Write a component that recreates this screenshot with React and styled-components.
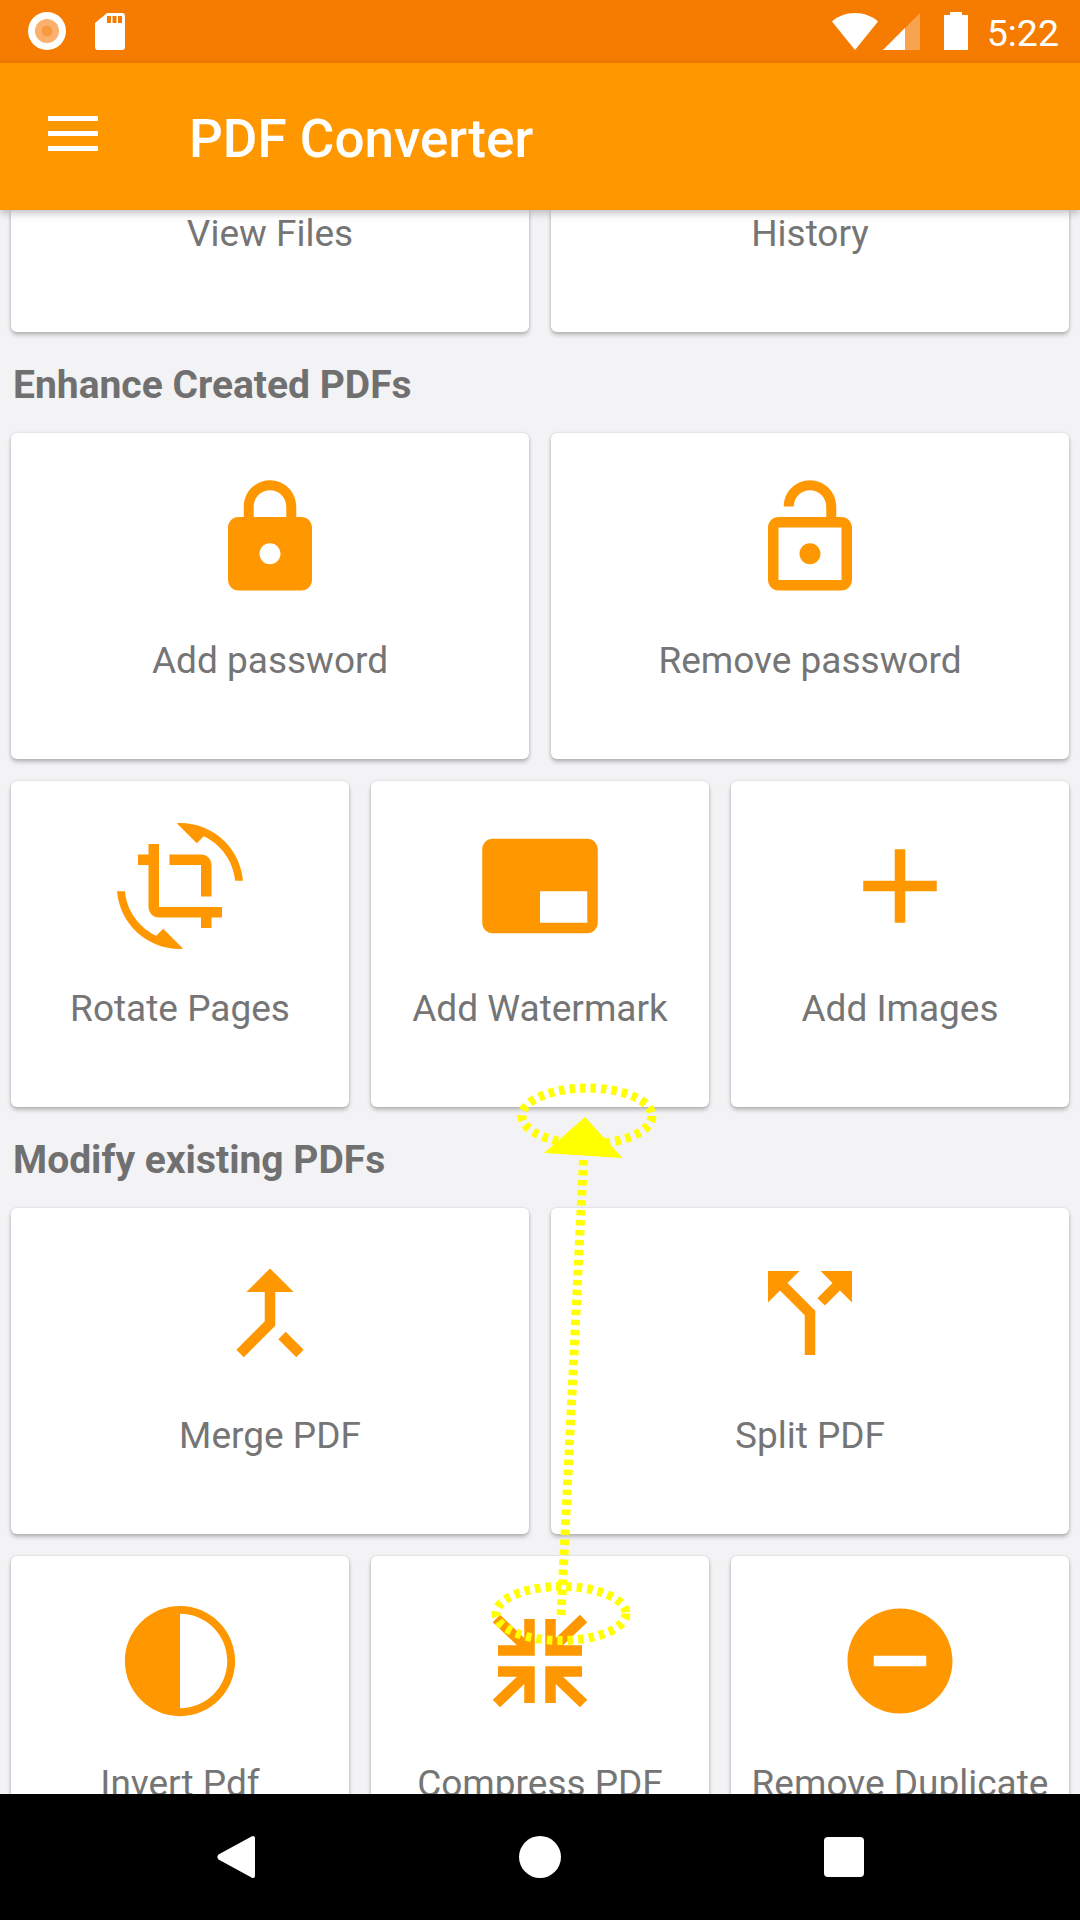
import React from 'react';
import styled, { createGlobalStyle } from 'styled-components';

const Global = createGlobalStyle`
  html, body { margin: 0; padding: 0; background: #f3f3f5; }
  * { box-sizing: border-box; }
`;

const Screen = styled.div`
  position: relative;
  width: 1080px;
  height: 1920px;
  display: flex;
  flex-direction: column;
  overflow: hidden;
  background: #f3f3f5;
  font-family: Roboto, "Liberation Sans", sans-serif;
`;

const StatusBar = styled.div`
  height: 63px;
  flex: none;
  background: #f57c00;
  display: flex;
  align-items: flex-start;
  justify-content: space-between;
  padding: 12px 21px 0 28px;
  color: #fff;
`;
const StatusGroup = styled.div`
  display: flex;
  align-items: flex-start;
  gap: ${p => p.$gap}px;
`;
const StatusIcon = styled.svg`
  display: block;
  flex: none;
  margin-left: ${p => p.$offset || 0}px;
`;
const Clock = styled.span`
  font-size: 37.5px;
  line-height: 38px;
  margin-left: 13.5px;
  padding-top: 2px;
  font-weight: 400;
`;

const Toolbar = styled.header`
  position: relative;
  z-index: 2;
  height: 147px;
  flex: none;
  background: #ff9800;
  box-shadow: 0 3px 8px rgba(0, 0, 0, 0.25);
  display: flex;
  align-items: center;
  padding-left: 48px;
`;
const Burger = styled.div`
  width: 50px;
  height: 35px;
  margin-right: 91px;
  margin-top: -7px;
  display: flex;
  flex-direction: column;
  justify-content: space-between;
`;
const BurgerBar = styled.span`
  display: block;
  height: 5px;
  background: #fff;
`;
const Title = styled.h1`
  margin: 4px 0 0;
  font-size: 53px;
  font-weight: 500;
  color: #fff;
`;

const Content = styled.main`
  flex: 1;
  min-height: 0;
  overflow: hidden;
  padding: 0 11px;
  display: flex;
  flex-direction: column;
`;
const Row = styled.div`
  display: grid;
  flex: none;
  grid-template-columns: repeat(${p => p.$cols}, 1fr);
  gap: 22px;
  margin-bottom: ${p => p.$after || 0}px;
`;
const Card = styled.div`
  height: 326px;
  background: #fff;
  border-radius: 6px;
  box-shadow: 0 3px 4px rgba(0, 0, 0, 0.24), 0 0 3px rgba(0, 0, 0, 0.12);
  display: flex;
  flex-direction: column;
  align-items: center;
  padding-top: 42px;
`;
const ScrolledCard = styled(Card)`
  height: 122px;
  padding-top: 3px;
  border-radius: 0 0 6px 6px;
`;
const Icon = styled.svg`
  display: block;
  width: 126px;
  height: 126px;
  flex: none;
  fill: #ff9800;
`;
const Label = styled.div`
  margin-top: 39px;
  font-size: 37px;
  line-height: 42px;
  color: #757575;
  white-space: nowrap;
`;
const ScrolledLabel = styled(Label)`
  margin-top: 0;
`;
const SectionTitle = styled.h2`
  flex: none;
  height: 101px;
  margin: 0;
  display: flex;
  align-items: center;
  font-size: 39px;
  font-weight: 700;
  color: #707070;
  padding: 4px 0 0 2px;
`;

const NavBar = styled.nav`
  position: relative;
  z-index: 2;
  height: 126px;
  flex: none;
  background: #000;
  display: grid;
  grid-template-columns: repeat(3, 42px);
  justify-content: center;
  justify-items: center;
  column-gap: 262px;
  align-items: center;
`;
const NavBack = styled.svg`
  display: block;
  width: 38px;
  height: 42px;
`;
const NavHome = styled.span`
  display: block;
  width: 42px;
  height: 42px;
  border-radius: 50%;
  background: #fff;
`;
const NavRecents = styled.span`
  display: block;
  width: 40px;
  height: 40px;
  border-radius: 4px;
  background: #fff;
`;

const Annotation = styled.svg`
  position: absolute;
  left: 0;
  top: 0;
  z-index: 1;
  pointer-events: none;
`;

const paths = {
  lock: 'M18 8h-1V6c0-2.76-2.24-5-5-5S7 3.24 7 6v2H6c-1.1 0-2 .9-2 2v10c0 1.1.9 2 2 2h12c1.1 0 2-.9 2-2V10c0-1.1-.9-2-2-2zm-6 9c-1.1 0-2-.9-2-2s.9-2 2-2 2 .9 2 2-.9 2-2 2zm3.1-9H8.9V6c0-1.71 1.39-3.1 3.1-3.1 1.71 0 3.1 1.39 3.1 3.1v2z',
  unlock: 'M12 17c1.1 0 2-.9 2-2s-.9-2-2-2-2 .9-2 2 .9 2 2 2zm6-9h-1V6c0-2.76-2.24-5-5-5S7 3.24 7 6h1.9c0-1.71 1.39-3.1 3.1-3.1 1.71 0 3.1 1.39 3.1 3.1v2H6c-1.1 0-2 .9-2 2v10c0 1.1.9 2 2 2h12c1.1 0 2-.9 2-2V10c0-1.1-.9-2-2-2zm0 12H6V10h12v10z',
  rotate: 'M7.47 21.49C4.2 19.93 1.86 16.76 1.5 13H0c.51 6.16 5.66 11 11.95 11 .23 0 .44-.02.66-.03L8.8 20.15l-1.33 1.34zM12.05 0c-.23 0-.44.02-.66.04l3.81 3.81 1.33-1.33C19.8 4.07 22.14 7.24 22.5 11H24c-.51-6.16-5.66-11-11.95-11zM16 14h2V8c0-1.11-.9-2-2-2h-6v2h6v6zm-8 2V4H6v2H4v2h2v8c0 1.1.89 2 2 2h8v2h2v-2h2v-2H8z',
  watermark: 'M21 3H3c-1.1 0-2 .9-2 2v14c0 1.1.9 2 2 2h18c1.1 0 2-.9 2-2V5c0-1.1-.9-2-2-2zm0 16h-9v-6h9v6z',
  add: 'M19 13h-6v6h-2v-6H5v-2h6V5h2v6h6v2z',
  merge: 'M17 20.41L18.41 19 15 15.59 13.59 17 17 20.41zM7.5 8H11v5.59L5.59 19 7 20.41l6-6V8h3.5L12 3.5 7.5 8z',
  split: 'M14 4l2.29 2.29-2.88 2.88 1.42 1.42 2.88-2.88L20 10V4zm-4 0H4v6l2.29-2.29 4.71 4.7V20h2v-8.41l-5.29-5.3z',
  invert: 'M12 1.5C6.2 1.5 1.5 6.2 1.5 12S6.2 22.5 12 22.5 22.5 17.8 22.5 12 17.8 1.5 12 1.5zm0 19.5V3c4.97 0 9 4.03 9 9s-4.03 9-9 9z',
  compress: 'M4 13h7v7H9v-3.6L4.4 20.8 3 19.4 7.6 15H4zM20 13h-7v7h2v-3.6l4.6 4.4 1.4-1.4-4.6-4.4H20zM4 11h7V4H9v3.6L4.4 3.2 3 4.6 7.6 9H4zM20 11h-7V4h2v3.6l4.6-4.4 1.4 1.4L16.4 9H20z',
  remove: 'M12 2C6.48 2 2 6.48 2 12s4.48 10 10 10 10-4.48 10-10S17.52 2 12 2zm5 11H7v-2h10v2z',
};

const Tile = ({ icon, label }) => (
  <Card>
    <Icon viewBox="0 0 24 24"><path d={paths[icon]} /></Icon>
    <Label>{label}</Label>
  </Card>
);

export default function App() {
  return (
    <Screen>
      <Global />
      <StatusBar>
        <StatusGroup $gap={28}>
          <StatusIcon width="38" height="38" viewBox="0 0 38 38">
            <circle cx="19" cy="19" r="19" fill="#fff" />
            <circle cx="19" cy="19" r="12" fill="#fbb06f" />
            <circle cx="19" cy="19" r="5.5" fill="#f89a3f" />
          </StatusIcon>
          <StatusIcon width="32" height="38" viewBox="0 0 32 38">
            <path fill="#fff" fillRule="evenodd" d="M13 1h15a3 3 0 0 1 3 3v31a3 3 0 0 1-3 3H4a3 3 0 0 1-3-3V11zM13 4v7h4V4zM18.500 4v7h4V4zM24 4v7h4V4z" />
          </StatusIcon>
        </StatusGroup>
        <StatusGroup $gap={5}>
          <StatusIcon width="46" height="38" viewBox="0 0 46 38">
            <path fill="#fff" d="M23 38 0 9.500C6 4 14 1 23 1s17 3 23 8.500z" />
          </StatusIcon>
          <StatusIcon width="37" height="38" viewBox="0 0 37 38">
            <path fill="#fff" fillOpacity="0.3" d="M37 1v37H0z" />
            <path fill="#fff" d="M22 16v22H0z" />
          </StatusIcon>
          <StatusIcon width="24" height="38" viewBox="0 0 24 38" $offset={19}>
            <path fill="#fff" d="M6 0h12v3h6v35H0V3h6z" />
          </StatusIcon>
          <Clock>5:22</Clock>
        </StatusGroup>
      </StatusBar>

      <Toolbar>
        <Burger><BurgerBar /><BurgerBar /><BurgerBar /></Burger>
        <Title>PDF Converter</Title>
      </Toolbar>

      <Content>
        <Row $cols={2}>
          <ScrolledCard><ScrolledLabel>View Files</ScrolledLabel></ScrolledCard>
          <ScrolledCard><ScrolledLabel>History</ScrolledLabel></ScrolledCard>
        </Row>
        <SectionTitle>Enhance Created PDFs</SectionTitle>
        <Row $cols={2} $after={22}>
          <Tile icon="lock" label="Add password" />
          <Tile icon="unlock" label="Remove password" />
        </Row>
        <Row $cols={3}>
          <Tile icon="rotate" label="Rotate Pages" />
          <Tile icon="watermark" label="Add Watermark" />
          <Tile icon="add" label="Add Images" />
        </Row>
        <SectionTitle>Modify existing PDFs</SectionTitle>
        <Row $cols={2} $after={22}>
          <Tile icon="merge" label="Merge PDF" />
          <Tile icon="split" label="Split PDF" />
        </Row>
        <Row $cols={3}>
          <Tile icon="invert" label="Invert Pdf" />
          <Tile icon="compress" label="Compress PDF" />
          <Tile icon="remove" label="Remove Duplicate" />
        </Row>
      </Content>

      <NavBar>
        <NavBack viewBox="0 0 38 42">
          <path fill="#fff" d="M36 0c1 0 2 1 2 2v38c0 1-1 2-2 2-.6 0-1-.2-1.500-.6L1.500 23.500C0 22 0 20 1.500 18.500L34.500.6C35 .2 35.400 0 36 0z" />
        </NavBack>
        <NavHome />
        <NavRecents />
      </NavBar>

      <Annotation width="1080" height="1794" viewBox="0 0 1080 1794">
        <g fill="none" stroke="#ffff00" strokeWidth="9">
          <ellipse cx="587" cy="1116" rx="65" ry="28" strokeDasharray="5.500 5" />
          <ellipse cx="561" cy="1613.500" rx="65" ry="27" strokeDasharray="5.500 5" />
          <path d="M583.500 1160 L561 1616" strokeDasharray="5.500 4.500" />
        </g>
        <path fill="#ffff00" d="M585 1117 L622.500 1158 L544 1153z" />
      </Annotation>
    </Screen>
  );
}
